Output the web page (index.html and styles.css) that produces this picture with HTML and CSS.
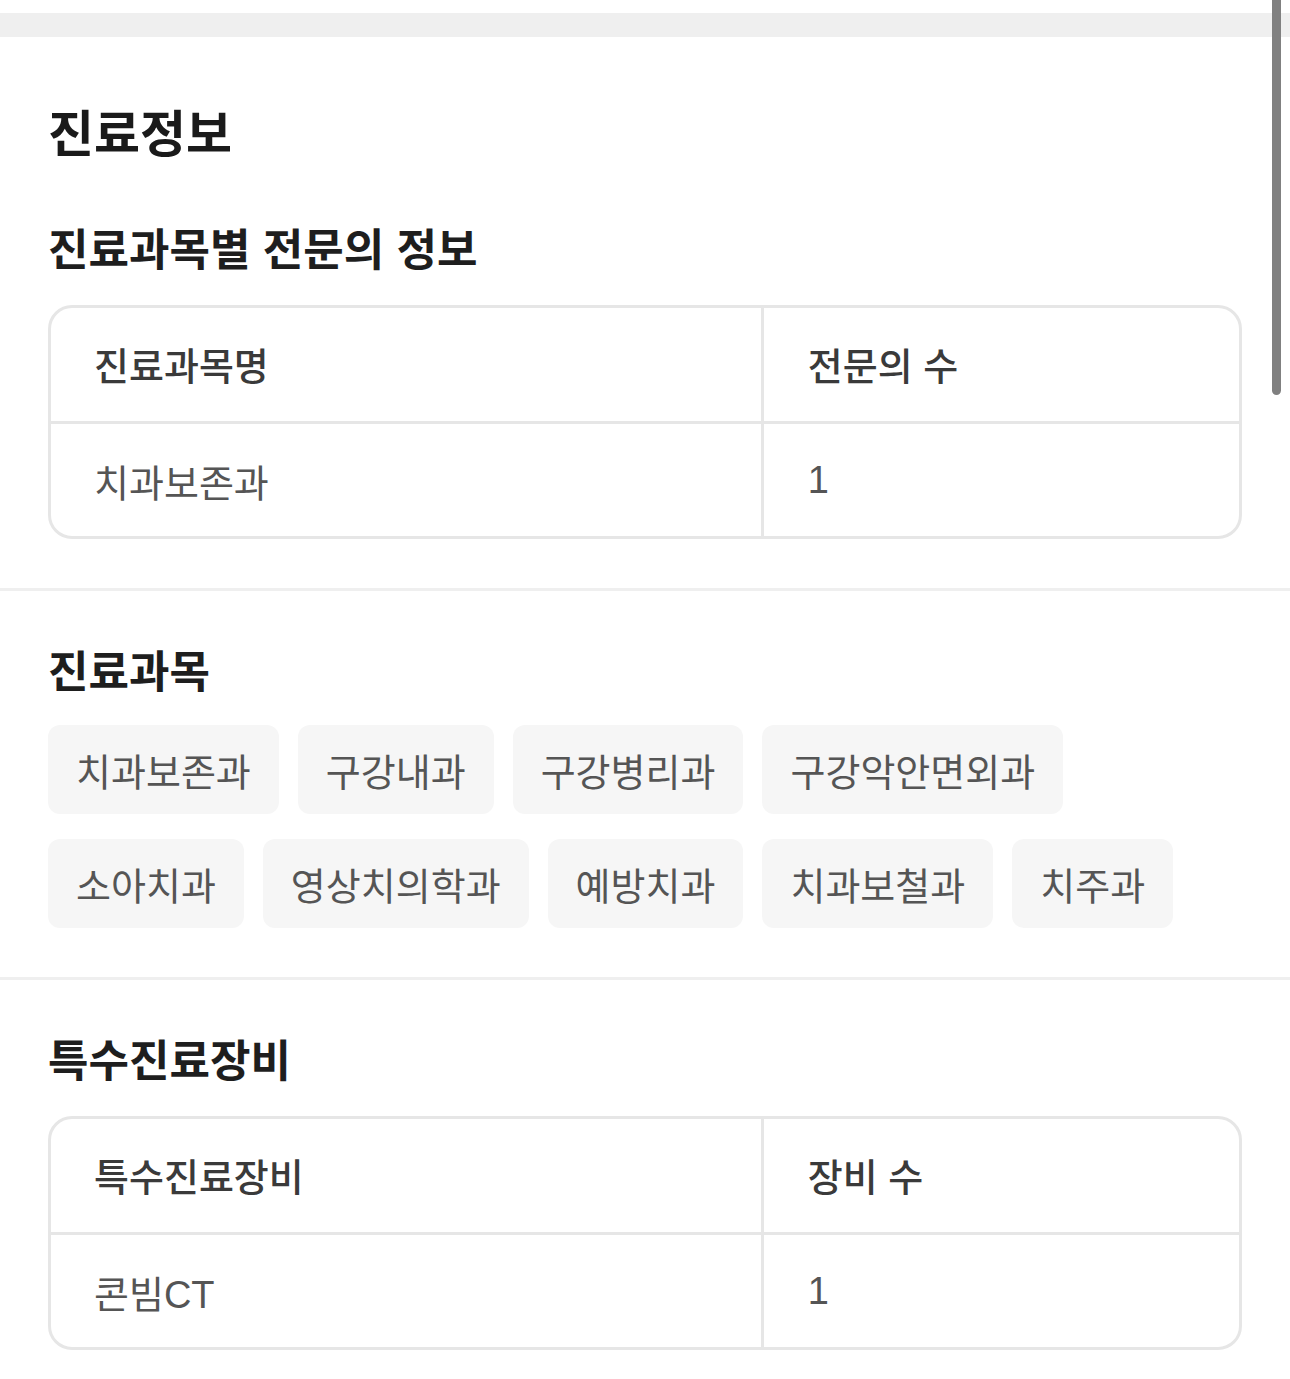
FILE: index.html
```html
<!DOCTYPE html>
<html lang="ko">
<head>
<meta charset="utf-8">
<title>진료정보</title>
<link rel="stylesheet" href="styles.css">
</head>
<body>
<div class="topband"></div>
<main class="page">
  <section class="section first">
    <h1 class="title">진료정보</h1>
    <h2 class="heading">진료과목별 전문의 정보</h2>
    <div class="table">
      <div class="row head">
        <div class="cell c1">진료과목명</div>
        <div class="cell c2">전문의 수</div>
      </div>
      <div class="row body">
        <div class="cell c1">치과보존과</div>
        <div class="cell c2">1</div>
      </div>
    </div>
  </section>
  <div class="divider"></div>
  <section class="section">
    <h2 class="heading">진료과목</h2>
    <div class="chips">
      <span class="chip">치과보존과</span>
      <span class="chip">구강내과</span>
      <span class="chip">구강병리과</span>
      <span class="chip">구강악안면외과</span>
      <span class="chip">소아치과</span>
      <span class="chip">영상치의학과</span>
      <span class="chip">예방치과</span>
      <span class="chip">치과보철과</span>
      <span class="chip">치주과</span>
    </div>
  </section>
  <div class="divider"></div>
  <section class="section">
    <h2 class="heading">특수진료장비</h2>
    <div class="table">
      <div class="row head">
        <div class="cell c1">특수진료장비</div>
        <div class="cell c2">장비 수</div>
      </div>
      <div class="row body">
        <div class="cell c1">콘빔CT</div>
        <div class="cell c2">1</div>
      </div>
    </div>
  </section>
</main>
<div class="scrollbar"></div>
</body>
</html>
```

FILE: styles.css
```css
* { box-sizing: border-box; }
html, body { margin: 0; padding: 0; background: #ffffff; }
body {
  font-family: "Liberation Sans", "Noto Sans CJK KR", sans-serif;
  color: #222;
  overflow: hidden;
}
.topband {
  margin-top: 13px;
  height: 24px;
  background: #efefef;
}
.page { display: flex; flex-direction: column; }
.section {
  padding: 50px 48px 49px 48px;
  display: flex;
  flex-direction: column;
}
.section.first { padding-top: 61px; }
.title {
  margin: 0 0 57px 0;
  font-size: 50px;
  line-height: 64px;
  font-weight: 700;
  color: #1a1a1a;
  font-family: "Noto Sans CJK KR", sans-serif;
}
.heading {
  margin: 0;
  font-size: 44px;
  line-height: 56px;
  font-weight: 700;
  color: #1e1e1e;
  font-family: "Noto Sans CJK KR", sans-serif;
}
.table {
  margin-top: 30px;
  border: 3px solid #e6e6e6;
  border-radius: 24px;
  display: flex;
  flex-direction: column;
  overflow: hidden;
}
.row { display: grid; grid-template-columns: 60% 40%; }
.row.head { height: 116px; border-bottom: 3px solid #e6e6e6; }
.row.body { height: 112px; }
.cell {
  display: flex;
  align-items: center;
  padding-left: 43px;
  font-size: 38px;
}
.cell.c1 { border-right: 3px solid #e6e6e6; }
.cell.c2 { padding-left: 44px; }
.row.head .cell {
  font-weight: 500;
  color: #3a3a3a;
  padding-bottom: 3px;
  font-family: "Noto Sans CJK KR", sans-serif;
}
.row.body .cell { font-weight: 400; color: #555555; }
.chips {
  margin-top: 28px;
  display: flex;
  flex-wrap: wrap;
  gap: 25px 19px;
}
.chip {
  background: #f6f6f6;
  border-radius: 12px;
  padding: 20px 28px;
  font-size: 38px;
  line-height: 49px;
  color: #555555;
  font-family: "Noto Sans CJK KR", sans-serif;
}
.divider { height: 3px; background: #efefef; }
.scrollbar {
  position: fixed;
  top: 0;
  left: 1272px;
  width: 9px;
  height: 395px;
  background: #808080;
  border-radius: 0 0 5px 5px;
}
```
